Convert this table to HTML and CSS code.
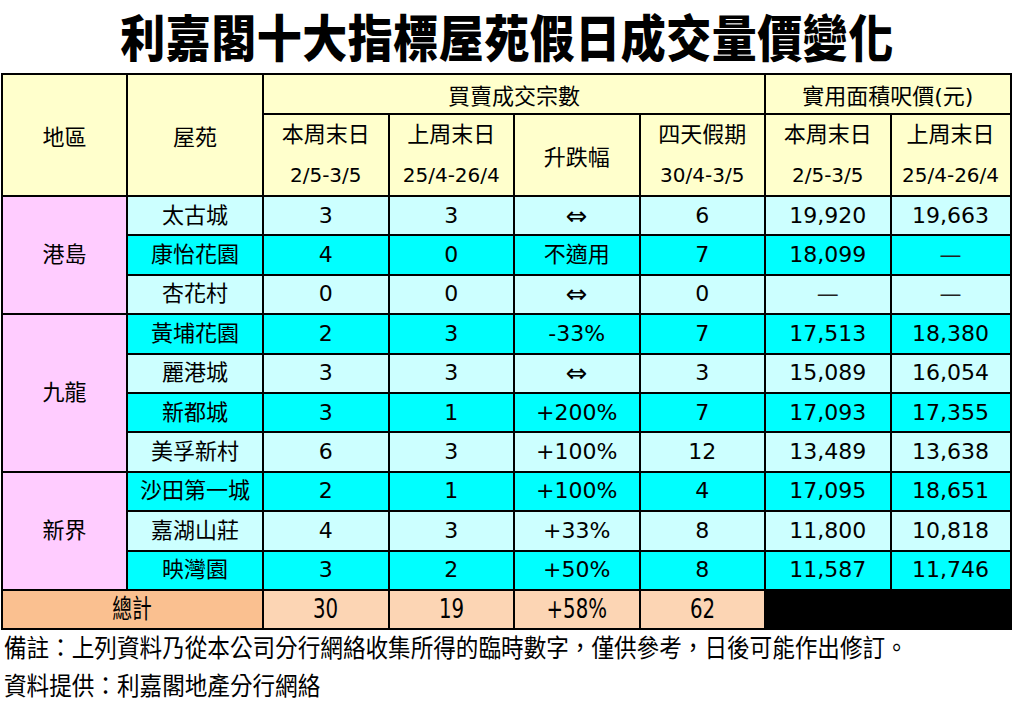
FILE: index.html
```html
<!DOCTYPE html>
<html lang="zh-Hant">
<head>
<meta charset="utf-8">
<title>利嘉閣十大指標屋苑假日成交量價變化</title>
<link rel="stylesheet" href="styles.css">
</head>
<body>
<h1 class="title"><span class="title-text">利嘉閣十大指標屋苑假日成交量價變化</span></h1>
<table class="report">
  <colgroup>
    <col class="c-region"><col class="c-estate"><col class="c-n"><col class="c-n"><col class="c-n"><col class="c-n"><col class="c-n"><col class="c-last">
  </colgroup>
  <thead>
    <tr class="h1">
      <th rowspan="2">地區</th>
      <th rowspan="2">屋苑</th>
      <th colspan="4">買賣成交宗數</th>
      <th colspan="2">實用面積呎價(元)</th>
    </tr>
    <tr class="h2">
      <th><div class="l">本周末日</div><div class="l d">2/5-3/5</div></th>
      <th><div class="l">上周末日</div><div class="l d">25/4-26/4</div></th>
      <th>升跌幅</th>
      <th><div class="l">四天假期</div><div class="l d">30/4-3/5</div></th>
      <th><div class="l">本周末日</div><div class="l d">2/5-3/5</div></th>
      <th><div class="l">上周末日</div><div class="l d">25/4-26/4</div></th>
    </tr>
  </thead>
  <tbody>
    <tr class="light"><td class="region" rowspan="3">港島</td><td>太古城</td><td>3</td><td>3</td><td class="sym">⇔</td><td>6</td><td>19,920</td><td>19,663</td></tr>
    <tr class="cyan"><td>康怡花園</td><td>4</td><td>0</td><td>不適用</td><td>7</td><td>18,099</td><td class="dash">—</td></tr>
    <tr class="light"><td>杏花村</td><td>0</td><td>0</td><td class="sym">⇔</td><td>0</td><td class="dash">—</td><td class="dash">—</td></tr>
    <tr class="cyan"><td class="region" rowspan="4">九龍</td><td>黃埔花園</td><td>2</td><td>3</td><td>-33%</td><td>7</td><td>17,513</td><td>18,380</td></tr>
    <tr class="light"><td>麗港城</td><td>3</td><td>3</td><td class="sym">⇔</td><td>3</td><td>15,089</td><td>16,054</td></tr>
    <tr class="cyan"><td>新都城</td><td>3</td><td>1</td><td>+200%</td><td>7</td><td>17,093</td><td>17,355</td></tr>
    <tr class="light"><td>美孚新村</td><td>6</td><td>3</td><td>+100%</td><td>12</td><td>13,489</td><td>13,638</td></tr>
    <tr class="cyan"><td class="region" rowspan="3">新界</td><td>沙田第一城</td><td>2</td><td>1</td><td>+100%</td><td>4</td><td>17,095</td><td>18,651</td></tr>
    <tr class="light"><td>嘉湖山莊</td><td>4</td><td>3</td><td>+33%</td><td>8</td><td>11,800</td><td>10,818</td></tr>
    <tr class="cyan"><td>映灣園</td><td>3</td><td>2</td><td>+50%</td><td>8</td><td>11,587</td><td>11,746</td></tr>
  </tbody>
  <tfoot>
    <tr class="total">
      <td class="total-label" colspan="2"><span class="narrow">總計</span></td>
      <td><span class="narrow">30</span></td><td><span class="narrow">19</span></td><td><span class="narrow">+58%</span></td><td><span class="narrow">62</span></td>
      <td class="blank" colspan="2"></td>
    </tr>
  </tfoot>
</table>
<p class="note"><span class="tall">備註：上列資料乃從本公司分行網絡收集所得的臨時數字，僅供參考，日後可能作出修訂。</span></p>
<p class="note"><span class="tall">資料提供：利嘉閣地產分行網絡</span></p>
</body>
</html>
```
FILE: styles.css
```css
html, body {
  margin: 0;
  padding: 0;
  background: #ffffff;
}
body {
  width: 1014px;
  font-family: "DejaVu Sans", "Noto Sans CJK TC", sans-serif;
  color: #000;
}
.title {
  margin: 0;
  height: 73px;
  display: flex;
  justify-content: center;
  align-items: flex-start;
  font-family: "Noto Sans CJK TC", sans-serif;
  font-weight: 900;
  font-size: 45px;
  line-height: 72px;
}
.title-text {
  display: inline-block;
  transform: scaleY(1.1);
  letter-spacing: 0.5px;
}
.report {
  border-collapse: collapse;
  table-layout: fixed;
  width: 1010px;
  margin-left: 1px;
  font-size: 22px;
}
.c-region { width: 125px; }
.c-estate { width: 136px; }
.c-n { width: 125.5px; }
.c-last { width: 120px; }
.report th, .report td {
  border: 2px solid #000;
  padding: 0;
  text-align: center;
  vertical-align: middle;
  font-weight: normal;
  white-space: nowrap;
  overflow: hidden;
}
.report th {
  background: #ffffcc;
}
.h1 th { height: 38px; }
.h2 th { height: 77px; }
.h2 .l { height: 40px; line-height: 40px; }
.h2 .l.d { font-size: 20px; }
.report td {
  height: 37.4px;
  line-height: 36px;
}
.light td { background: #ccffff; }
.cyan td { background: #00ffff; }
.report td.region { background: #ffccff; }
.report td.sym { font-size: 26px; }
.report td.dash { color: #222; }
.total td {
  background: #fcd5b4;
  height: 37px;
  font-size: 26px;
}
.narrow {
  display: inline-block;
  transform: scaleX(0.76);
}
.total td.total-label { background: #fac090; }
.total td.blank { background: #000; }
.note {
  margin: 0;
  padding-left: 4px;
  font-family: "Noto Sans CJK TC", sans-serif;
  font-size: 22.6px;
  height: 38px;
  line-height: 34px;
  white-space: nowrap;
}
.tall {
  display: inline-block;
  transform-origin: left center;
  transform: scaleY(1.12);
}
```
